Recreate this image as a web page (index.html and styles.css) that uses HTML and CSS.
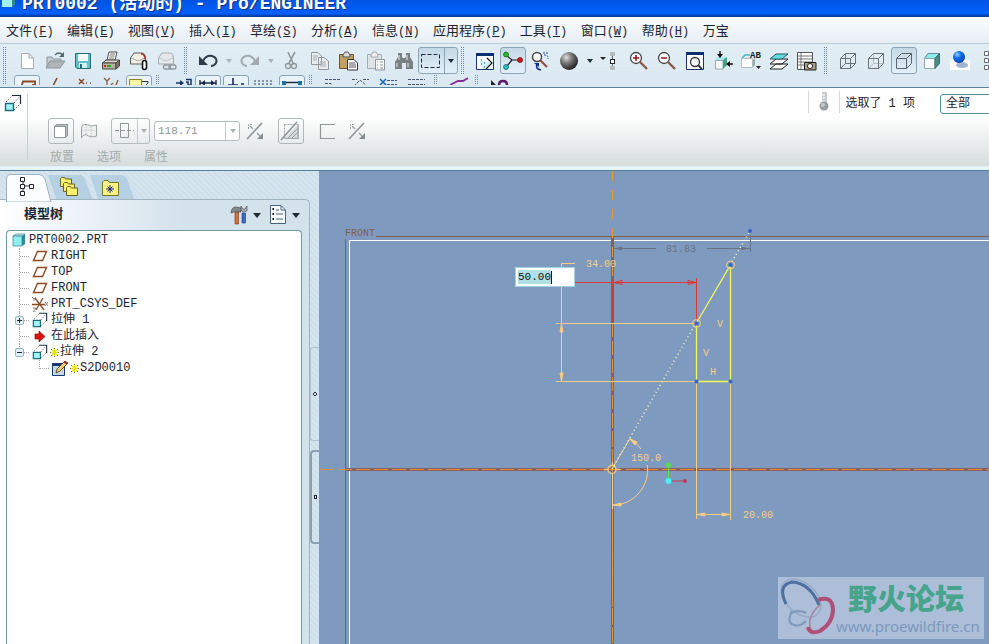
FILE: index.html
```
<!DOCTYPE html>
<html lang="zh-CN">
<head>
<meta charset="utf-8">
<title>PRT0002 (活动的) - Pro/ENGINEER</title>
<link rel="stylesheet" href="styles.css">
</head>
<body>
<svg class="defs" width="0" height="0" aria-hidden="true">
  <defs>
    <radialGradient id="ball" cx=".35" cy=".3" r=".8"><stop offset="0" stop-color="#ddd"/><stop offset=".4" stop-color="#777"/><stop offset="1" stop-color="#111"/></radialGradient>
    <radialGradient id="blueball" cx=".35" cy=".3" r=".8"><stop offset="0" stop-color="#9cf"/><stop offset=".4" stop-color="#0a6cf0"/><stop offset="1" stop-color="#013c9c"/></radialGradient>
    <symbol id="extrude" viewBox="0 0 18 18"><path d="M2 8L8 2M10 9L16 2M10 16L16 10" stroke="#667" stroke-dasharray="1.500 1.500" fill="none"/><path d="M8 1.500H16.500V10" fill="none" stroke="#1c2a38" stroke-width="1.200"/><path d="M1.500 9.500H9.500V16.500H1.500Z" fill="#a0f4f8" stroke="#256a78" stroke-width="1.400"/></symbol>
    <symbol id="plane" viewBox="0 0 16 16"><path d="M5.500 3.500H14.500L10.500 12.500H1.500Z" fill="none" stroke="#8a4a22" stroke-width="1.400"/></symbol>
    <symbol id="star" viewBox="0 0 9 9"><path d="M4.500 0V9M0 4.500H9M1 1L8 8M8 1L1 8" stroke="#555510" stroke-width=".8"/><path d="M4.500 1V8M1 4.500H8M2 2L7 7M7 2L2 7" stroke="#e8e018" stroke-width="1.200"/></symbol>
    <symbol id="flip" viewBox="0 0 18 18"><path d="M1 17L16 1" stroke="#8e9698" stroke-width="1.600"/><path d="M4 4L7 7M11 11L14 14" stroke="#949c9e" stroke-width="1.300"/><path d="M2.500 7V2.500H7" fill="none" stroke="#949c9e" stroke-dasharray="2 1"/><path d="M17 17H11L17 11Z" fill="#848c8e"/></symbol>
    <symbol id="folder" viewBox="0 0 12 10"><path d="M.5 9.500V1.500L1.500.5H4.500L5.500 2H11.500V9.500Z" fill="#f8ee70" stroke="#6c6420"/></symbol>
  </defs>
</svg>

<header class="titlebar">
  <svg class="title-icon" width="13" height="8" viewBox="0 0 13 8"><path d="M0 0H10V7H0Z" fill="#a0f0f0"/><path d="M10 0H13V5L10 7Z" fill="#2f8a92"/></svg>
  <h1>PRT0002 (活动的) - Pro/ENGINEER</h1>
</header>

<nav class="menubar">
  <button><span>文件</span>(<u>F</u>)</button>
  <button><span>编辑</span>(<u>E</u>)</button>
  <button><span>视图</span>(<u>V</u>)</button>
  <button><span>插入</span>(<u>I</u>)</button>
  <button><span>草绘</span>(<u>S</u>)</button>
  <button><span>分析</span>(<u>A</u>)</button>
  <button><span>信息</span>(<u>N</u>)</button>
  <button><span>应用程序</span>(<u>P</u>)</button>
  <button><span>工具</span>(<u>T</u>)</button>
  <button><span>窗口</span>(<u>W</u>)</button>
  <button><span>帮助</span>(<u>H</u>)</button>
  <button><span>万宝</span></button>
</nav>

<section class="toolbars">
  <div class="toolrow">
    <i class="grip"></i>
    <button class="tool" aria-label="新建"><svg viewBox="0 0 24 20"><path d="M6.500 2.500H14L18.500 7V17.500H6.500ZM14 2.500V7H18.500" fill="#fff" stroke="#a4acb0"/></svg></button>
    <button class="tool" aria-label="打开"><svg viewBox="0 0 24 20"><path d="M4 16V6H9L10 8H18V10" fill="#c6cccf" stroke="#8f979b"/><path d="M3 17L7 10H22L17 17Z" fill="#adb5b9" stroke="#8f979b"/><path d="M12 4Q16 0 20 4" fill="none" stroke="#566" stroke-width="1.200"/><path d="M21 1V6H16Z" fill="#566"/></svg></button>
    <button class="tool" aria-label="保存"><svg viewBox="0 0 24 20"><path d="M4.500 2.500H19.500V17.500H6L4.500 16Z" fill="#5cc4c8" stroke="#246e76"/><path d="M7 3H17V10H7Z" fill="#f2fafa"/><path d="M8 12H16V17H8Z" fill="#d6f0f2"/><path d="M9 13H11V17H9Z" fill="#246e76"/></svg></button>
    <button class="tool" aria-label="打印"><svg viewBox="0 0 24 20"><path d="M8 9L10 1H18L16 9Z" fill="#fff" stroke="#444"/><path d="M11 3H16M10.500 5H15.500M10 7H15" stroke="#777"/><path d="M3.500 12L7 9H20L17 12Z" fill="#ded8cc" stroke="#4a463e"/><path d="M3.500 12H17V18H3.500Z" fill="#b8b0a4" stroke="#4a463e"/><path d="M17 12L20.500 9V15L17 18Z" fill="#7a746a" stroke="#4a463e"/><path d="M5 14H7V16H5Z" fill="#d22"/><path d="M8 14H12V16H8Z" fill="#2a2"/></svg></button>
    <button class="tool" aria-label="发送附件"><svg viewBox="0 0 24 20"><path d="M3.500 7L7 2H15Q18 2 18.500 7V13H3.500Z" fill="#f2eee2" stroke="#5a5a5a"/><path d="M4 7L11 10L18 7M4 13H10" fill="none" stroke="#aaa"/><path d="M14 3Q18 3 18 8" fill="none" stroke="#a33" stroke-width="1.500"/><rect x="15.500" y="9.500" width="4" height="9" rx="2" fill="#fff" stroke="#111" stroke-width="1.600"/></svg></button>
    <button class="tool" aria-label="发送链接"><svg viewBox="0 0 24 20"><path d="M3.500 7L7 2H15Q18 2 18.500 7V13H3.500Z" fill="#e4e8ea" stroke="#a4acb0"/><path d="M4 7L11 10L18 7" fill="none" stroke="#c0c6ca"/><rect x="8.500" y="14" width="7" height="4" rx="2" fill="none" stroke="#8f979b" stroke-width="1.400"/><rect x="14" y="14" width="7" height="4" rx="2" fill="none" stroke="#8f979b" stroke-width="1.400"/></svg></button>
    <i class="grip"></i>
    <button class="tool" aria-label="撤消"><svg viewBox="0 0 24 20"><path d="M7 10Q10 4 16 5Q22 7 20 12Q18 15 15 15" fill="none" stroke="#2c3c48" stroke-width="2"/><path d="M3 5V14H12Z" fill="#2c3c48"/></svg></button>
    <button class="drop dim" aria-label="撤消列表"></button>
    <button class="tool" aria-label="重做"><svg viewBox="0 0 24 20"><path d="M17 10Q14 4 8 5Q2 7 4 12Q6 15 9 15" fill="none" stroke="#a0aab0" stroke-width="2"/><path d="M21 5V14H12Z" fill="#a0aab0"/></svg></button>
    <button class="drop dim" aria-label="重做列表"></button>
    <button class="tool" aria-label="剪切"><svg viewBox="0 0 24 20"><path d="M8 1L13 12M15 1L9 12" stroke="#8f979b" stroke-width="1.600"/><circle cx="8" cy="15" r="2.500" fill="none" stroke="#8f979b" stroke-width="1.300"/><circle cx="14" cy="15" r="2.500" fill="none" stroke="#8f979b" stroke-width="1.300"/></svg></button>
    <button class="tool" aria-label="复制"><svg viewBox="0 0 24 20"><path d="M3.500 1.500H10L13.500 5V13.500H3.500ZM10.500 6.500H16L20.500 10V18.500H10.500Z" fill="#e8ecee" stroke="#8f979b"/><path d="M5 5H10M5 7H9M5 9H9M12 11H18M12 13H18M12 15H18" stroke="#a4acb0"/></svg></button>
    <button class="tool" aria-label="粘贴"><svg viewBox="0 0 24 20"><path d="M3.500 3.500H17.500V17.500H3.500Z" fill="#c2a060" stroke="#6a5630"/><path d="M7 4L9 1H12L14 4V6H7Z" fill="#ddd" stroke="#555"/><path d="M11.500 8.500H18L21.500 12V19H11.500Z" fill="#fff" stroke="#333"/><path d="M13 12H19M13 14H20M13 16H20" stroke="#555"/></svg></button>
    <button class="tool" aria-label="选择性粘贴"><svg viewBox="0 0 24 20"><path d="M3.500 3.500H17.500V17.500H3.500Z" fill="#dde3e6" stroke="#a4acb0"/><path d="M7 4L9 1H12L14 4V6H7Z" fill="#eee" stroke="#a4acb0"/><path d="M11.500 8.500H20.500V19H11.500Z" fill="#f6f8f9" stroke="#8f979b"/><path d="M13 11H14M16 11H19M13 14H14M16 14H19M13 17H14M16 17H19" stroke="#8f979b"/></svg></button>
    <button class="tool" aria-label="查找"><svg viewBox="0 0 24 20"><path d="M6 2H10V6L11 7H13L14 6V2H18V6L21 11V18H14V12H10V18H3V11L6 6Z" fill="#788084"/><path d="M7 4V9M5 12V16M15 4V9M16 12V16" stroke="#d0d6d8" stroke-width="1.300"/></svg></button>
    <div class="split">
      <button aria-label="选取框"><svg viewBox="0 0 24 20"><rect x="2.500" y="3.500" width="18" height="13" fill="none" stroke="#1c2a38" stroke-dasharray="4 2"/></svg></button>
      <button class="drop" aria-label="选取方式"></button>
    </div>
    <i class="grip"></i>
    <button class="tool" aria-label="重画"><svg viewBox="0 0 24 20"><path d="M3.500 2.500H20.500V18.500H3.500Z" fill="#fff" stroke="#16356a"/><path d="M3 2H21V5H3Z" fill="#0c2f70"/><path d="M6 8L9 18H14L18 11Q12 12 6 8Z" fill="#d3eff2"/><path d="M8 9H9M11 12H12M8 13H9M11 16H12" stroke="#258"/><path d="M13 18L19 12L14 7" fill="none" stroke="#111" stroke-width="1.200"/></svg></button>
    <button class="tool on" aria-label="旋转中心"><svg viewBox="0 0 24 20"><path d="M5 4L11 9H18M11 9L6 15" fill="none" stroke="#222" stroke-width="1.200"/><circle cx="5" cy="3.500" r="2.500" fill="#2db82d" stroke="#145a14" stroke-width=".7"/><circle cx="19" cy="9" r="2.500" fill="#d21818" stroke="#600" stroke-width=".7"/><circle cx="5" cy="16" r="2.500" fill="#28c0c0" stroke="#156" stroke-width=".7"/></svg></button>
    <button class="tool" aria-label="定向模式"><svg viewBox="0 0 24 20"><circle cx="8" cy="6" r="4.500" fill="#fff" stroke="#444" stroke-width="1.500"/><path d="M11 9L18 16" stroke="#8a4a3a" stroke-width="2"/><path d="M14 2H19M15 4Q20 4 19 8" fill="none" stroke="#1c4aa0" stroke-dasharray="2 1"/><path d="M12 19Q6 18 8 13" fill="none" stroke="#102a90" stroke-width="1.600"/><path d="M5 12H10V16Z" fill="#102a90"/></svg></button>
    <button class="tool" aria-label="外观库"><svg viewBox="0 0 24 20"><circle cx="12" cy="10" r="9" fill="url(#ball)"/></svg></button>
    <button class="drop" aria-label="外观列表"></button>
    <button class="tool" aria-label="层状态"><svg viewBox="0 0 24 20"><path d="M1 6H7L4 9Z" fill="#222"/><path d="M13.500 5V17" stroke="#667"/><rect x="11" y="1" width="5" height="4" fill="#b4bcc0"/><rect x="11.500" y="8.500" width="4" height="4" fill="#fff" stroke="#222"/><rect x="11" y="15" width="5" height="4" fill="#b4bcc0"/></svg></button>
    <button class="tool" aria-label="放大"><svg viewBox="0 0 24 20"><circle cx="9" cy="7" r="5.500" fill="#fff" stroke="#444" stroke-width="1.300"/><path d="M6 7H12M9 4V10" stroke="#a01818" stroke-width="1.500"/><path d="M13 11L20 18" stroke="#8a5a48" stroke-width="2.400"/></svg></button>
    <button class="tool" aria-label="缩小"><svg viewBox="0 0 24 20"><circle cx="9" cy="7" r="5.500" fill="#fff" stroke="#444" stroke-width="1.300"/><path d="M6 7H12" stroke="#a01818" stroke-width="1.500"/><path d="M13 11L20 18" stroke="#8a5a48" stroke-width="2.400"/></svg></button>
    <button class="tool" aria-label="重新调整"><svg viewBox="0 0 24 20"><path d="M3.500 1.500H20.500V18.500H3.500Z" fill="#fff" stroke="#16356a"/><path d="M3 1H21V4H3Z" fill="#0c2f70"/><circle cx="12" cy="11" r="4.500" fill="#f4f8fa" stroke="#333" stroke-width="1.300"/><path d="M15 14L19 18" stroke="#333" stroke-width="1.800"/></svg></button>
    <button class="tool" aria-label="定向"><svg viewBox="0 0 24 20"><path d="M4.500 9.500H12V18H4.500Z" fill="#f8fcfc" stroke="#9aa8ac"/><path d="M4 9L7 6H16L12 9Z" fill="#9fe8e8"/><path d="M12 9L16 6V14L12 18Z" fill="#44a088"/><path d="M9 0V4M22 13H18" stroke="#111" stroke-width="1.400"/><path d="M6 3H12L9 7ZM19 10V16L15 13Z" fill="#111"/></svg></button>
    <button class="tool" aria-label="视图列表"><svg viewBox="0 0 24 20"><path d="M2.500 7.500H13.500V16.500H2.500Z" fill="#fff" stroke="#b0bac0"/><path d="M3 7L6 4H11" fill="none" stroke="#49b8bc" stroke-width="1.500"/><path d="M14 9L16 7V14L14 16Z" fill="#9aa"/><path d="M17 15H22L19.500 18Z" fill="#222"/><text class="glyph" x="11" y="7">AB</text></svg></button>
    <button class="tool" aria-label="层"><svg viewBox="0 0 24 20"><path d="M3 18L9 13H21L15 18ZM3 13L9 8H21L15 13Z" fill="#fff" stroke="#222"/><path d="M3 8L9 3H21L15 8Z" fill="#62dce0" stroke="#2a5a60"/></svg></button>
    <button class="tool" aria-label="视图管理器"><svg viewBox="0 0 24 20"><path d="M2.500 1.500H17.500V18.500H2.500Z" fill="#fff" stroke="#555"/><path d="M3 5H17M3 8H17M3 11H17M3 14H17M6 2V18" stroke="#777"/><path d="M9.500 11.500H21V19H9.500Z" fill="#a89e86" stroke="#222"/><circle cx="15" cy="15" r="2.500" fill="#fff" stroke="#222"/></svg></button>
    <i class="grip"></i>
    <button class="tool" aria-label="线框"><svg viewBox="0 0 24 20"><path d="M4.500 7.500H14.500V17.500H4.500ZM9.500 2.500H19.500V12.500H9.500ZM4.500 7.500L9.500 2.500M14.500 7.500L19.500 2.500M14.500 17.500L19.500 12.500M4.500 17.500L9.500 12.500" fill="none" stroke="#6b7378"/></svg></button>
    <button class="tool" aria-label="隐藏线"><svg viewBox="0 0 24 20"><path d="M9.500 3V12.500H19M4.500 17.500L9.500 12.500" fill="none" stroke="#b6bec2"/><path d="M4.500 7.500H14.500V17.500H4.500ZM4.500 7.500L9.500 2.500H19.500V12.500L14.500 17.500M14.500 7.500L19.500 2.500" fill="none" stroke="#6b7378"/></svg></button>
    <button class="tool on" aria-label="无隐藏线"><svg viewBox="0 0 24 20"><path d="M4.500 7.500H14.500V17.500H4.500ZM4.500 7.500L9.500 2.500H19.500V12.500L14.500 17.500M14.500 7.500L19.500 2.500" fill="none" stroke="#5b666c"/></svg></button>
    <button class="tool" aria-label="着色"><svg viewBox="0 0 24 20"><path d="M4.500 7.500L8 2.500H19.500L15 7.500Z" fill="#8ceaea" stroke="#689"/><path d="M4.500 7.500H15V17.500H4.500Z" fill="#fff" stroke="#8aa"/><path d="M15 7.500L19.500 2.500V12.500L15 17.500Z" fill="#46907c" stroke="#467"/></svg></button>
    <button class="tool" aria-label="增强的真实感"><svg viewBox="0 0 24 20"><path d="M2 9H22V19H2Z" fill="#fff"/><ellipse cx="14" cy="14" rx="6" ry="3" fill="#9fb4cc"/><circle cx="11" cy="6" r="6" fill="url(#blueball)"/></svg></button>
    <button class="tool" aria-label="更多"><svg viewBox="0 0 24 20"><path d="M8.500.5H12.500V4.500H8.500ZM8.500 7.500H12.500V11.500H8.500ZM8.500 14.500H12.500V18.500H8.500ZM14 2H16M14 9H16M14 16H16" fill="#fff" stroke="#667"/></svg></button>
  </div>
  <div class="toolrow clipped">
    <i class="grip"></i>
    <button class="tool on" aria-label="基准平面"><svg viewBox="0 0 24 20"><path d="M6 12L8 5.500H20V9H17" fill="none" stroke="#8a4a22" stroke-width="1.800"/></svg></button>
    <button class="tool" aria-label="基准轴"><svg viewBox="0 0 24 20"><path d="M14 2L8 14" stroke="#8a4a22" stroke-width="1.600"/></svg></button>
    <button class="tool" aria-label="基准点"><svg viewBox="0 0 24 20"><path d="M8 3L13 8M13 3L8 8M15 7H16M19 7H20" stroke="#8a4a22" stroke-width="1.500"/></svg></button>
    <button class="tool" aria-label="坐标系"><svg viewBox="0 0 24 20"><path d="M5 2L8 5L11 2M8 5V9M12 9L14 7M19 4L15 14" fill="none" stroke="#8a5a3a" stroke-width="1.300"/></svg></button>
    <button class="tool on" aria-label="注释"><svg viewBox="0 0 24 20"><path d="M2.500 3.500H14.500V14H2.500Z" fill="#fbf6a4" stroke="#8a8230"/><path d="M15 5.500H21V7L18 10" fill="none" stroke="#333"/></svg></button>
    <i class="grip"></i>
    <button class="tool" aria-label="草绘方向"><svg viewBox="0 0 24 20"><path d="M8 7H14M18 3.500H23V9H20V6H18" fill="none" stroke="#16356a" stroke-width="1.500"/><path d="M12 4L16 7L12 10Z" fill="#16356a"/></svg></button>
    <button class="tool on" aria-label="显示尺寸"><svg viewBox="0 0 24 20"><path d="M4 4V12M20 4V12M4 7H20" stroke="#1c2a48" stroke-width="1.400"/><path d="M5 7L9 4V10ZM19 7L15 4V10Z" fill="#1c2a48"/></svg></button>
    <button class="tool on" aria-label="显示约束"><svg viewBox="0 0 24 20"><path d="M9 2V9M4 9H14M17 8H20" stroke="#1c2a68" stroke-width="1.600"/></svg></button>
    <button class="tool" aria-label="显示栅格"><svg viewBox="0 0 24 20"><path d="M2 5H21M2 8H21" stroke="#2c3c68" stroke-dasharray="2 2"/></svg></button>
    <button class="tool on" aria-label="显示顶点"><svg viewBox="0 0 24 20"><path d="M4 6.500H20" stroke="#1c2a48" stroke-width="1.500"/><path d="M2 5H6V9H2ZM18 5H22V9H18Z" fill="#1673a8"/></svg></button>
    <i class="grip"></i>
    <button class="tool" aria-label="着色封闭环"><svg viewBox="0 0 24 20"><path d="M4 3.500H19M4 7.500H10V10" stroke="#45566c" fill="none" stroke-dasharray="3 1"/></svg></button>
    <button class="tool" aria-label="加亮开放端点"><svg viewBox="0 0 24 20"><path d="M3 3.500H8M14 3.500H20M5 10L11 4L18 10" stroke="#45566c" fill="none" stroke-dasharray="3 1"/></svg></button>
    <button class="tool" aria-label="重叠几何"><svg viewBox="0 0 24 20"><path d="M10 4.500H20M10 8.500H20" stroke="#45566c" stroke-dasharray="3 1"/><path d="M3 3L9 9M9 3L3 9" stroke="#1562c0" stroke-width="1.500"/></svg></button>
    <button class="tool" aria-label="特征要求"><svg viewBox="0 0 24 20"><path d="M3 3.500H20M3 8.500H20" stroke="#45566c" stroke-dasharray="3 1"/></svg></button>
    <i class="grip"></i>
    <button class="tool" aria-label="检查"><svg viewBox="0 0 24 20"><path d="M4 9L12 5H17L22 2" fill="none" stroke="#8a2c9a" stroke-width="1.800"/></svg></button>
    <i class="grip"></i>
    <button class="tool" aria-label="帮助"><svg viewBox="0 0 24 20"><path d="M4 4V12L9 9Z" fill="#222"/><path d="M12 9Q12 5 16 5Q20 5 20 9" fill="none" stroke="#5c1c6c" stroke-width="2.500"/></svg></button>
  </div>
</section>

<section class="dashboard">
  <div class="feature"><svg width="18" height="18"><use href="#extrude"/></svg></div>
  <div class="options">
    <div class="controls">
      <button class="dash framed" aria-label="实体"><svg width="26" height="26"><path d="M9 6H20V18L17 20V8H6Z" fill="#b4bcbe"/><path d="M6.500 8.500H17.500V19.500H6.500Z" fill="#fff" stroke="#8e9698"/><path d="M6.500 8.500L9 6.500H19.500V17L17.500 19.500" fill="none" stroke="#8e9698"/></svg></button>
      <button class="dash" aria-label="曲面"><svg width="26" height="26"><path d="M5.500 20V10Q6 6 10 6.500Q16 9 20.500 7V18Q14 20 11 17Q7 16 5.500 20Z" fill="#eef0f0" stroke="#9ca4a6"/><path d="M10 7V17M15 9V18M6 13Q13 11 20 13" fill="none" stroke="#bcc2c4" stroke-dasharray="1 1"/></svg></button>
      <div class="depth">
        <button aria-label="对称深度"><svg width="25" height="24"><path d="M8.500 4.500H16.500V18.500H8.500Z" fill="none" stroke="#8e9698"/><path d="M3 11.500H22" stroke="#8e9698" stroke-dasharray="4 2"/></svg></button>
        <button class="drop dim" aria-label="深度选项"></button>
      </div>
      <div class="combo"><input aria-label="深度" value="118.71"><button class="drop dim" aria-label="深度值列表"></button></div>
      <button class="dash" aria-label="反向深度"><svg width="18" height="18"><use href="#flip"/></svg></button>
      <button class="dash framed gap-left" aria-label="移除材料"><svg width="26" height="26"><path d="M6.500 6.500H20.500V20.500H6.500Z" fill="none" stroke="#9ca4a6" stroke-dasharray="2 1"/><path d="M20 7V20H7Z" fill="#d3d8da"/><path d="M10 20L20 10M14 20L20 14M20 7V20.500H7" fill="none" stroke="#9ca4a6"/><path d="M3 22L19 4" stroke="#8e9698" stroke-width="1.600"/></svg></button>
      <button class="dash gap-left" aria-label="加厚草绘"><svg width="18" height="18"><path d="M17 2.500H2.500V16.500H17" fill="none" stroke="#8e9698" stroke-width="1.200"/></svg></button>
      <button class="dash" aria-label="反向厚度"><svg width="18" height="18"><use href="#flip"/></svg></button>
    </div>
    <div class="slides"><button>放置</button><button>选项</button><button>属性</button></div>
  </div>
  <div class="status">
    <span class="thermo"><svg width="14" height="20"><rect x="5" y="1" width="5" height="12" fill="#c6cacc"/><path d="M5 4H8M5 7H8M5 10H8" stroke="#fff"/><circle cx="7" cy="15" r="4.500" fill="#989ea0"/><circle cx="6" cy="14" r="2" fill="#c4c8ca"/></svg></span>
    <label for="filter">选取了 1 项</label>
    <select id="filter"><option>全部</option></select>
  </div>
</section>

<main class="workspace">
  <aside class="navigator">
    <div class="tabs">
      <button class="tab active" aria-label="模型树"><svg width="46" height="29"><path d="M.5 29V6Q.5 1.500 5 1.500H33Q37 1.500 39 6L45 29Z" fill="#fbfdfe" stroke="#9fb2c0"/><path d="M17 7V21M17 13H26" stroke="#333"/><path d="M14.500 4.500H18.500V8.500H14.500ZM14.500 11.500H18.500V15.500H14.500ZM14.500 18.500H18.500V22.500H14.500ZM23.500 11.500H27.500V15.500H23.500Z" fill="#fff" stroke="#222"/></svg></button>
      <button class="tab" aria-label="文件夹浏览器"><svg width="46" height="29"><path d="M0 2H31Q35 2 37 6L45 28H9Z" fill="#b4d0e2"/><use href="#folder" x="12" y="4" width="12" height="10"/><use href="#folder" x="15" y="9" width="12" height="10"/><use href="#folder" x="18" y="13" width="12" height="10"/></svg></button>
      <button class="tab" aria-label="收藏夹"><svg width="46" height="29"><path d="M0 2H31Q35 2 37 6L45 28H9Z" fill="#b4d0e2"/><path d="M12.500 22.500V9L14 7.500H18L19.500 9.500H28.500V22.500Z" fill="#fbf284" stroke="#7a7428"/><path d="M20 12V20M16 16H24M17.500 13.500L22.500 18.500M22.500 13.500L17.500 18.500" stroke="#222a80"/></svg></button>
    </div>
    <div class="panel">
      <div class="panel-head">
        <h2>模型树</h2>
        <button aria-label="设置"><svg width="18" height="20"><path d="M1 7Q2 2 6 2L11 3V7H8L7 6L1 8Z" fill="#80888c" stroke="#444" stroke-width=".6"/><path d="M5 7H8.500V19H5Z" fill="#d8703a" stroke="#6a3418" stroke-width=".6"/><path d="M11 1V5L13 7L17 6V1L15 4H13Z" fill="#a8b0b4" stroke="#444" stroke-width=".6"/><path d="M12 8H15.500V18H12Z" fill="#3a6cc0" stroke="#1c3a78" stroke-width=".6"/></svg><i class="arrow"></i></button>
        <button aria-label="显示"><svg width="18" height="20"><path d="M1.500.5H12L16.500 5V18.500H1.500Z" fill="#f6fbff" stroke="#47627a"/><path d="M12 1V5H16M7 9H14M7 14H14M7 5H10" fill="none" stroke="#47627a"/><path d="M3.500 4H5M3.500 9H5M3.500 14H5" stroke="#111" stroke-width="2"/></svg><i class="arrow"></i></button>
      </div>
      <ul class="tree">
        <li class="row"><svg width="14" height="14"><path d="M1 3L4 1H13L11 3Z" fill="#c8fafa" stroke="#3c7c88" stroke-width=".7"/><path d="M1 3H10V13H1Z" fill="#8ff0f2" stroke="#3c7c88" stroke-width=".7"/><path d="M10 3L13 1V11L10 13Z" fill="#2d8a98"/></svg><span>PRT0002.PRT</span></li>
        <li class="row child"><svg width="16" height="16"><use href="#plane"/></svg><span>RIGHT</span></li>
        <li class="row child"><svg width="16" height="16"><use href="#plane"/></svg><span>TOP</span></li>
        <li class="row child"><svg width="16" height="16"><use href="#plane"/></svg><span>FRONT</span></li>
        <li class="row child"><svg width="16" height="16"><path d="M0 8.500H13M3 2L12 14M11 2L4 14" stroke="#8a4a22" stroke-width="1.300"/><path d="M0 1L2 3L4 1M2 3V5M13 6L16 10M16 6L13 10M1 12H4L1 16H4" fill="none" stroke="#777" stroke-width=".9"/></svg><span>PRT_CSYS_DEF</span></li>
        <li class="row child"><button class="toggle plus" aria-label="展开"></button><svg width="16" height="16"><use href="#extrude"/></svg><span>拉伸 1</span></li>
        <li class="row child"><svg width="16" height="16"><path d="M3 6H7V3L13 8.500L7 14V11H3Z" fill="#e01010" stroke="#600" stroke-width=".6"/></svg><span>在此插入</span></li>
        <li class="row child last"><button class="toggle" aria-label="折叠"></button><svg width="16" height="16"><use href="#extrude"/></svg><svg class="mark" width="9" height="9"><use href="#star"/></svg><span>拉伸 2</span></li>
        <li class="row child last deep"><svg width="16" height="16"><path d="M.5 3.500H12.500V15.500H.5Z" fill="#c8d8e4" stroke="#173a74"/><path d="M0 3H13V6H0Z" fill="#173a74"/><path d="M4 13L5 9L13 1L16 3L8 11Z" fill="#f0d070" stroke="#443210" stroke-width=".8"/><path d="M13 1L16 3L14.500 4.500L11.500 2.500Z" fill="#a03030"/></svg><svg class="mark" width="9" height="9"><use href="#star"/></svg><span>S2D0010</span></li>
      </ul>
    </div>
    <div class="sashes"><button class="sash" aria-label="折叠导航器"></button><button class="sash raised" aria-label="打开浏览器"></button></div>
  </aside>

  <section class="canvas">
    <svg class="sketch" width="100%" height="100%">
      <g transform="translate(-319 -171)" fill="none">
        <path d="M345.500 239V2000M376 236.500H4000" stroke="#80604c"/>
        <path d="M349.500 2000V240.500H4000" stroke="#fff"/>
        <path d="M613 248.500H656M707 248.500H750M750.500 235V252" stroke="#6c7484"/>
        <path d="M614 248.500L622 246.500V250.500ZM749 248.500L741 246.500V250.500Z" fill="#6c7484"/>
        <path d="M612.500 237V2000M345 469.500H4000" stroke="#855f62" stroke-width="3"/>
        <path d="M612.500 171V2000" stroke="#e8982c" stroke-dasharray="10 9"/>
        <path d="M612.500 323V2000M320 469.500H4000" stroke="#e8902c" stroke-dasharray="14 4"/>
        <path d="M612.500 279V322" stroke="#c8403c" stroke-width="3"/>
        <path d="M575 282.500H697M696.500 278V320" stroke="#dc3838"/>
        <path d="M614 282.500L622 280.500V284.500ZM696 282.500L688 280.500V284.500Z" stroke="#dc3838"/>
        <g stroke="#f8cc84">
          <path d="M575 263.500H561.500V381M556 323.500H696M556 381.500H696M696.500 382V519M730.500 382V520M697 514.500H730"/>
          <path d="M561.500 324L560 332H563ZM561.500 381L560 373H563ZM697 514.500L705 513V516ZM730 514.500L722 513V516Z" fill="#f8cc84"/>
          <path d="M612 469L630 438.500A35 35 0 0 1 641 449M647.500 465A36 36 0 0 1 613 505.500"/>
          <path d="M630 439L637 442L635 445ZM613 505L621 503V506Z" fill="#f8cc84"/>
          <circle cx="612" cy="469.500" r="4" stroke-width="1.300"/><path d="M604 469.500H608M616 469.500H620M612.500 462V466M612.500 474V509" stroke-width="1.300"/>
        </g>
        <path d="M612 469L696 323M730 265L750 231" stroke="#f8fcb0" stroke-width="1.500" stroke-dasharray="1 3"/>
        <path d="M696.500 323L730.500 265V381.500H696.500Z" stroke="#f4f850" stroke-width="1.300"/>
        <circle cx="696.500" cy="323.500" r="4" stroke="#f8cc84"/><circle cx="730.500" cy="265" r="4" stroke="#f8cc84"/>
        <g fill="#3c60cc"><circle cx="696.500" cy="323.500" r="2"/><circle cx="730.500" cy="265" r="2"/><circle cx="750" cy="231" r="2"/><circle cx="696.500" cy="381.500" r="2"/><circle cx="730.500" cy="381.500" r="2"/></g>
        <path d="M668.500 465V481" stroke="#58e058"/><path d="M668.500 481H685" stroke="#c03858"/>
        <circle cx="668.500" cy="465" r="2.500" fill="#50e050"/><circle cx="685" cy="481" r="2" fill="#c03858"/><circle cx="668.500" cy="481" r="3" fill="#48f0f8"/>
        <g class="dim-text">
          <text x="345" y="236" class="plane-name">FRONT</text>
          <text x="666" y="252" class="weak">81.83</text>
          <text x="586" y="267">34.00</text>
          <text x="631" y="461">150.0</text>
          <text x="743" y="518">20.00</text>
          <text x="717" y="327">V</text><text x="703" y="356">V</text><text x="710" y="375">H</text>
        </g>
      </g>
    </svg>
    <input class="value-edit" aria-label="尺寸值" value="50.00">
    <div class="watermark">
      <svg width="60" height="60"><g fill="none"><ellipse cx="23" cy="21" rx="23" ry="15" transform="rotate(42 23 21)" stroke="#98aac8" stroke-width="1.500"/><path d="M8 27Q-1 8 14 5Q32 6 41 28" stroke="#4c70a0" stroke-width="3"/><path d="M14 34Q8 46 16 48Q22 50 28 44M14 36Q20 32 28 36" stroke="#8098b8" stroke-width="2"/><path d="M40 23Q54 18 55 32Q55 46 42 54Q32 58 30 50" stroke="#b05078" stroke-width="4"/><path d="M33 52Q28 40 42 28" stroke="#a88098" stroke-width="1.500"/></g></svg>
      <div><strong>野火论坛</strong><span>www.proewildfire.cn</span></div>
    </div>
  </section>
</main>
</body>
</html>
```
FILE: styles.css
```
* { box-sizing: border-box; }

html, body { height: 100%; }

body {
  margin: 0;
  display: flex;
  flex-direction: column;
  overflow: hidden;
  background: #dae8f2;
  color: #1c2430;
  font-family: "Liberation Mono", "Noto Sans CJK SC", monospace;
  font-size: 12px;
  line-height: 16px;
}

button, input, select {
  font: inherit;
  color: inherit;
  margin: 0;
  padding: 0;
  border: 0;
  background: none;
}

svg { display: block; flex: none; }
.defs { position: absolute; }
h1, h2, ul { margin: 0; padding: 0; }

/* Title */
.titlebar {
  flex: none;
  display: flex;
  align-items: flex-start;
  gap: 7px;
  height: 17px;
  padding-left: 2px;
  overflow: hidden;
  background: linear-gradient(#0054e4, #0460fc 80%, #0048c8 88%, #123c80);
}
.titlebar h1 {
  color: #fff;
  font-size: 18px;
  font-weight: 700;
  line-height: 8px;
  white-space: nowrap;
  text-shadow: 1px 1px 0 #0a3080;
}

/* Menu */
.menubar {
  flex: none;
  display: flex;
  align-items: center;
  height: 27px;
  padding: 4px 0 0 6px;
  overflow: hidden;
  background: linear-gradient(#fafcfe, #e6eef5);
  border-bottom: 1px solid #b8ccd8;
}
.menubar button {
  flex: none;
  min-width: 61px;
  padding-right: 13px;
  text-align: left;
  white-space: nowrap;
}
.menubar span { font-size: 13px; }

/* Toolbars */
.toolbars {
  flex: none;
  padding: 3px 0 2px;
  background: linear-gradient(#e2eef4, #dae8f2);
  border-bottom: 1px solid #5a86a0;
  overflow: hidden;
}
.toolrow { display: flex; height: 28px; overflow: hidden; }
.toolrow.clipped { height: 10px; }
.grip {
  flex: none;
  width: 4px;
  margin: 0 6px 0 3px;
  background: conic-gradient(transparent 75%, #6f8a9c 0) 0 0 / 2px 2px;
}
.tool {
  flex: none;
  display: flex;
  align-items: center;
  justify-content: center;
  width: 26px;
  height: 27px;
  margin: 0 1px;
  border: 1px solid transparent;
  border-radius: 3px;
}
.tool svg, .split svg { width: 24px; height: 20px; }
.tool.on, .split {
  border: 1px solid #8ba4b4;
  background: linear-gradient(#c4d8e6, #e4f0f8);
}
.clipped .tool { align-items: flex-start; }
.clipped .tool.on { background: #eaf3f8; }
.glyph { font: 700 9px "Liberation Mono", monospace; fill: #222; }
.split {
  flex: none;
  display: flex;
  align-items: stretch;
  width: 40px;
  height: 27px;
  border-radius: 3px;
}
.split > button:first-child {
  display: flex;
  align-items: center;
  width: 26px;
  border-right: 1px solid #8ba4b4;
}
.drop {
  flex: none;
  display: flex;
  align-items: center;
  justify-content: center;
  width: 14px;
}
.split .drop, .depth .drop { width: 12px; }
.drop::before, .arrow {
  content: "";
  border: 3px solid transparent;
  border-top: 4px solid #1c2a38;
  border-bottom: 0;
}
.drop.dim::before { border-top-color: #a8b2b8; }

/* Dashboard */
.dashboard {
  flex: none;
  display: flex;
  height: 83px;
  overflow: hidden;
  background: linear-gradient(#fff 35%, #d6dcdc 95%, #e6f4fc 96%);
  border-bottom: 1px solid #58809c;
}
.feature {
  width: 28px;
  margin: 6px 0 10px;
  padding-left: 4px;
  border-right: 1px solid #c8d0d2;
}
.options { padding: 30px 0 0 20px; }
.controls { display: flex; align-items: center; height: 26px; }
.dash {
  display: flex;
  align-items: center;
  justify-content: center;
  width: 30px;
  height: 26px;
}
.dash.framed {
  width: 26px;
  border: 1px solid #b0b8ba;
  border-radius: 3px;
}
.dash.gap-left { margin-left: 8px; }
.depth, .combo {
  display: flex;
  height: 26px;
  margin-left: 7px;
  border: 1px solid #b4bcbe;
  border-radius: 3px;
}
.depth .drop, .combo .drop { border-left: 1px solid #c4cacc; }
.combo {
  width: 86px;
  height: 20px;
  margin-left: 4px;
  background: #fff;
}
.combo input { flex: 1; min-width: 0; padding-left: 3px; color: #8c9496; font-size: 11px; }
.slides { display: flex; gap: 23px; padding: 6px 0 0 2px; color: #a4acae; }
.status {
  display: flex;
  align-items: flex-start;
  margin: 3px -21px 0 auto;
  white-space: nowrap;
}
.thermo {
  display: flex;
  justify-content: center;
  width: 32px;
  border: solid #d4d8da;
  border-width: 0 1px;
  height: 22px;
}
.status label { padding: 5px 0 0 5px; }
.status select {
  width: 70px;
  height: 20px;
  margin: 3px 0 0 25px;
  padding-left: 5px;
  border: 1px solid #5a8898;
  border-radius: 3px;
  background: #fff;
  appearance: none;
}

/* Workspace */
.workspace { flex: 1; display: flex; min-height: 0; }
.navigator {
  flex: none;
  display: grid;
  grid-template: 28px 1fr / 310px 9px;
  width: 319px;
  background: repeating-linear-gradient(45deg, #d0e0ea 0 2px, #d6e4ee 2px 4px);
}
.tabs { grid-column: 1 / 3; display: flex; padding: 2px 0 0 6px; }
.tab { width: 42px; height: 27px; }
.tab.active { z-index: 1; }
.panel {
  display: flex;
  flex-direction: column;
  min-height: 0;
  padding: 0 7px 0 6px;
  border: solid #a0b4c0;
  border-width: 1px 1px 0 0;
  border-top-right-radius: 5px;
  background: linear-gradient(90deg, #fff, #d4e2ec 60%);
}
.panel-head { display: flex; align-items: center; height: 30px; flex: none; gap: 6px; }
.panel-head h2 { flex: 1; padding-left: 18px; font-size: 13px; }
.panel-head button { display: flex; align-items: center; gap: 5px; width: 33px; }
.arrow { border-width: 4px; border-top-width: 5px; }
.tree {
  flex: 1;
  min-height: 0;
  padding: 1px 0 0 5px;
  border: 1px solid #7098a8;
  border-bottom: 0;
  border-radius: 4px 4px 0 0;
  background: #fff;
  list-style: none;
}
.row { display: flex; align-items: center; gap: 3px; height: 16px; white-space: nowrap; }
.row .mark { margin: 0 -2px 0 -1px; }
.child::before {
  content: "";
  flex: none;
  align-self: flex-start;
  width: 9px;
  height: 8px;
  margin-left: 7px;
  border: dotted #a0a8ac;
  border-width: 0 0 1px 1px;
}
.child:not(.last)::before {
  align-self: stretch;
  height: auto;
  border-bottom: 0;
  background: linear-gradient(90deg, #a0a8ac 50%, transparent 50%) 0 8px / 2px 1px repeat-x;
}
.child { position: relative; }
.child.deep { padding-left: 20px; }
.toggle {
  position: absolute;
  left: 3px;
  top: 4px;
  width: 9px;
  height: 9px;
  border: 1px solid #98b4c4;
  border-radius: 2px;
  background: linear-gradient(#1c2a38, #1c2a38) center / 5px 1px no-repeat #e4f0f8;
}
.toggle.plus {
  background: linear-gradient(#1c2a38, #1c2a38) center / 5px 1px no-repeat,
    linear-gradient(#1c2a38, #1c2a38) center / 1px 5px no-repeat #e4f0f8;
}
.sashes { display: flex; flex-direction: column; gap: 9px; padding-top: 148px; }
.sash {
  flex: none;
  height: 94px;
  border: 1px solid #b0c4d4;
  border-right: 0;
  border-radius: 3px 0 0 3px;
  background: radial-gradient(circle, #d8e6f0 1px, #223 1px 2px, transparent 2px);
}
.sash.raised { border: 2px solid #8ca0b0; border-right: 0; border-radius: 4px 0 0 4px; }

/* Drawing area */
.canvas {
  flex: 1;
  position: relative;
  min-width: 0;
  overflow: hidden;
  background: #7e9bbf;
}
.sketch { position: absolute; inset: 0; }
.dim-text { font: 10px "Liberation Mono", monospace; fill: #f8cc84; }
.weak { fill: #6c7484; }
.plane-name { fill: #80604c; }
.value-edit {
  position: absolute;
  left: 196px;
  top: 96px;
  width: 60px;
  height: 20px;
  padding: 0 2px;
  border: 1px solid #a4d0e4;
  background:
    linear-gradient(#111, #111) 35px center / 1px 13px no-repeat,
    linear-gradient(#b0e0e4, #b0e0e4) 2px center / 33px 14px no-repeat #fff;
  color: #111;
  font-size: 11px;
}
.watermark {
  position: absolute;
  right: 5px;
  bottom: 5px;
  display: flex;
  width: 206px;
  height: 62px;
  background: #acbed8;
}
.watermark div { display: flex; flex-direction: column; margin-left: -2px; }
.watermark strong {
  padding-left: 12px;
  color: #46a48c;
  font: 900 29px/40px "Noto Sans CJK SC", sans-serif;
}
.watermark span { color: #7c98c0; font: 15px/18px "Noto Sans", sans-serif; }
```
